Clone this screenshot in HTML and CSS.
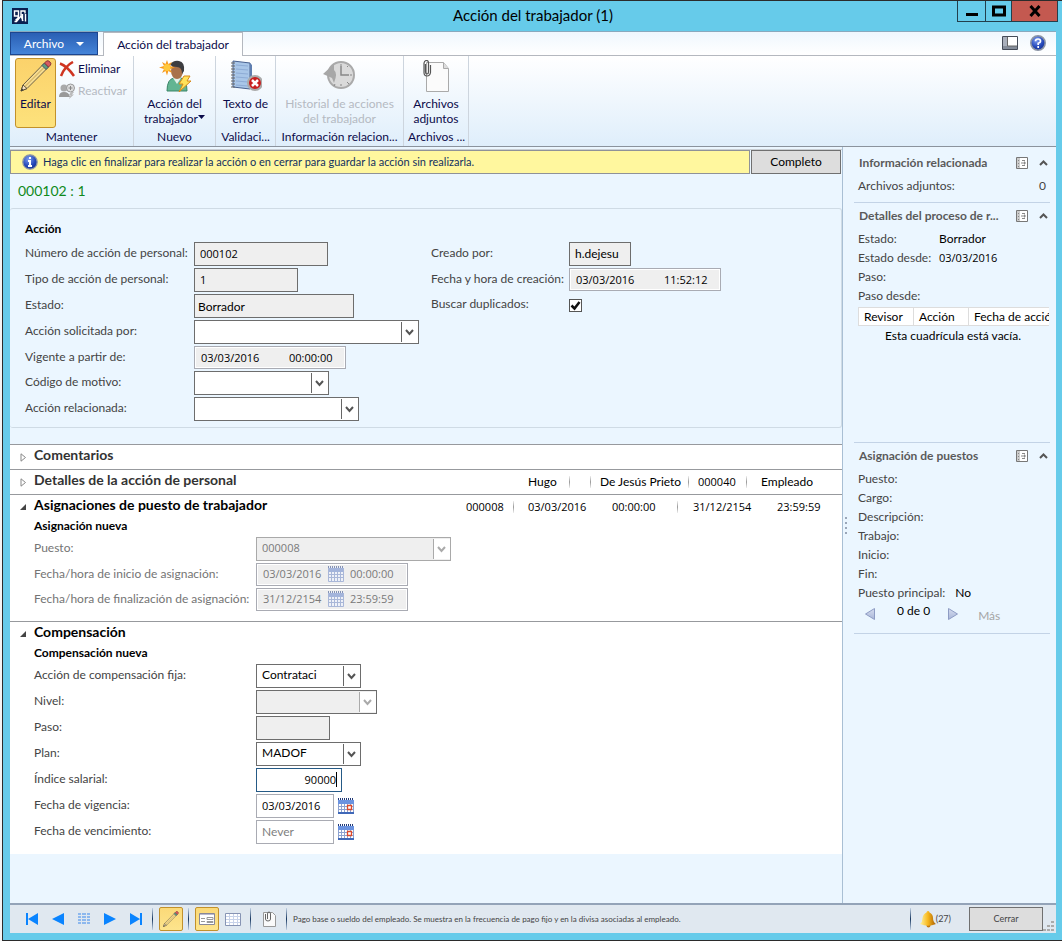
FILE: index.html
```html
<!DOCTYPE html>
<html lang="es">
<head>
    <meta charset="UTF-8">
    <meta name="viewport" content="width=device-width, initial-scale=1.0">
    <title>Acción del trabajador (1)</title>
    <link rel="stylesheet" href="styles.css">
</head>
<body>
    <!-- shared icons -->
    <svg class="defs" width="0" height="0" aria-hidden="true">
        <defs>
            <linearGradient id="gold" x1="0" y1="0" x2="1" y2="0"><stop offset="0" stop-color="#fff3a0"/><stop offset=".5" stop-color="#f7b71d"/><stop offset="1" stop-color="#a85c00"/></linearGradient>
            <linearGradient id="arrow" x1="0" y1="0" x2="0" y2="1"><stop offset="0" stop-color="#d5dcef"/><stop offset="1" stop-color="#a9b6d8"/></linearGradient>
            <radialGradient id="blue" cx=".4" cy=".3" r=".8"><stop offset="0" stop-color="#7d9df0"/><stop offset=".6" stop-color="#2447b8"/><stop offset="1" stop-color="#122c86"/></radialGradient>
            <symbol id="pencil" viewBox="0 0 32 32">
                <path d="M1 31 3 25 24 3.500 28 7.500 7 28.500z" fill="#f5dc90" stroke="#6b6046"/>
                <path d="M5 26.500 26 5.500" stroke="#c9a552"/>
                <path d="M1 31 3 25 7 28.500z" fill="#f3dfc0" stroke="#5b5136"/>
                <path d="M1 31 2 28.500 3.500 30z" fill="#333"/>
                <path d="M22 5.500 24.500 3 28.500 7 26 9.500z" fill="#5c9c80" stroke="#456"/>
                <path d="M24.500 3 26.500 1Q28 0 30 2 31.500 3.500 30.500 5L28.500 7z" fill="#d65a62" stroke="#833"/>
            </symbol>
            <symbol id="calendar" viewBox="0 0 16 16">
                <path d="M0 2h16v14H0z" fill="#fff"/>
                <path d="M0 2h16v4H0z" fill="#6b93e0"/>
                <path d="M0 1h16" stroke="#223a78" stroke-width="2" stroke-dasharray="1 1"/>
                <path d="M.5 6v9.500M3.500 6v10M6.500 6v10M9.500 6v10M12.500 6v10M15.500 6v10M0 8.500h16M0 11.500h16" fill="none" stroke="#8da2d0"/>
                <path d="M9.500 7.500h4v4h-4z" fill="#fff" stroke="#dc4a2c" stroke-width="1.300"/>
                <path d="M0 15h16" stroke="#3f68b8" stroke-width="2"/>
            </symbol>
            <symbol id="calendar-off" viewBox="0 0 16 16">
                <path d="M0 1h16v15H0z" fill="#eef1f8"/>
                <path d="M0 2h16v4H0z" fill="#a3b4db"/>
                <path d="M0 1h16" stroke="#8492b4" stroke-width="2" stroke-dasharray="1 1"/>
                <path d="M.5 2v13.500h15V2M3.500 6v10M6.500 6v10M9.500 6v10M12.500 6v10M0 8.500h16M0 11.500h16" fill="none" stroke="#a9b7d8"/>
            </symbol>
            <symbol id="pane" viewBox="0 0 12 12">
                <path d="M.5 .5h11v11H.5z" fill="#fff" stroke="#777"/>
                <path d="M1 1h3v10H1z" fill="#ccc"/>
                <path d="M2 3.500h1M2 6.500h1M2 9.500h1M6 3.500h3M6 8.500h3M5 6h3" stroke="#888"/>
                <path d="M8 4l2 2-2 2z" fill="#888"/>
            </symbol>
            <symbol id="up" viewBox="0 0 9 6"><path d="M1 5 4.500 1.500 8 5" fill="none" stroke="#555" stroke-width="2"/></symbol>
        </defs>
    </svg>

    <div class="window">
        <header class="titlebar">
            <svg class="app-icon" width="16" height="16" viewBox="0 0 16 16"><path fill="#0a2050" d="M0 0h16v16H0z"/><path d="M6.500 8h-4V3h4v5q0 3-3 4M9 8V3h4v2.500M2.500 13.500h2L9 8l2 5M10.500 6v7M13.500 6v7.500" fill="none" stroke="#fff" stroke-width="1.400"/></svg>
            <h1>Acción del trabajador (1)</h1>
            <div class="win-buttons">
                <button aria-label="Minimizar" class="w-min"><svg width="14" height="12"><path d="M1 8h12v3H1z"/></svg></button>
                <button aria-label="Maximizar" class="w-max"><svg width="14" height="12"><path d="M1.500 2h11v8h-11z" fill="none" stroke="#000" stroke-width="3"/></svg></button>
                <button aria-label="Cerrar ventana" class="w-close"><svg width="12" height="12"><path d="M1.500 1 10.500 11M10.500 1 1.500 11" stroke="#000" stroke-width="3"/></svg></button>
            </div>
        </header>

        <div class="client">
            <nav class="tabs">
                <button class="tab-file">Archivo <svg width="8" height="4"><path d="M0 0h8L4 4z" fill="#fff"/></svg></button>
                <button class="tab-active">Acción del trabajador</button>
                <div class="tab-tools">
                    <svg width="16" height="14"><path d="M.5 .5h15v13H.5z" fill="#fff" stroke="#454b58"/><path d="M1 1h4v12H1z" fill="#aab0bc"/><path d="M1 10h14v3H1z" fill="#858d9a"/><path d="M5.500 1v9H15" fill="none" stroke="#666"/></svg>
                    <svg width="16" height="16"><circle cx="8" cy="8" r="7.200" fill="url(#blue)" stroke="#8c95a5" stroke-width="1.600"/><path d="M5.500 6.300Q5.500 4 8 4t2.500 2.200Q10.500 7.500 8.200 8.300V10M8.200 11v2" fill="none" stroke="#fff" stroke-width="1.700"/></svg>
                </div>
            </nav>

            <div class="ribbon">
                <section class="group g-keep">
                    <div class="group-body">
                        <button class="big selected"><svg width="32" height="32"><use href="#pencil"/></svg><span>Editar</span></button>
                        <div class="small-list">
                            <button class="small"><svg width="16" height="16"><path d="M1 2.500Q8 5 15 15M14 1Q6 5 2 15" fill="none" stroke="#cf3420" stroke-width="2.500"/></svg>Eliminar</button>
                            <button class="small" disabled><svg width="16" height="16"><circle cx="5" cy="5" r="3.500" fill="#aaa"/><path d="M0 14Q0 9 5 9t6 5z" fill="#999"/><circle cx="11.500" cy="5" r="4" fill="#ddd" stroke="#999"/><path d="M11.500 3v4M9.500 5h4" stroke="#888"/><path d="M12 9h3l-2 2.500h2L10 16l1.500-4H10z" fill="#bbb"/></svg>Reactivar</button>
                        </div>
                    </div>
                    <h2>Mantener</h2>
                </section>
                <section class="group g-new">
                    <div class="group-body">
                        <button class="big">
                            <svg width="32" height="32" viewBox="0 0 32 32"><path d="M8 31Q8 19 15 18h7q6 2 6 13z" fill="#62b592" stroke="#3a8568"/><path d="M14 18l4 6 4-6z" fill="#e4efe9"/><ellipse cx="18" cy="11" rx="6" ry="8" fill="#a9714a"/><path d="M11 5Q14 0 20 1q6 1 5 10l-2 3Q23 7 18 7q-4 0-7-2z" fill="#3d3d40"/><path d="M8 0l1.300 4L13 2l-2 4 5 1.500L11 9l2 4-3.700-2L8 15.500 6.500 11 3 13l2-4-5-1.500L5 6 3 2l3.500 2z" fill="#f79a1c"/><circle cx="8" cy="7.500" r="3.500" fill="#ffc83c"/><path d="M25 16h6l-3 5h4L20 32l4-8h-4z" fill="#ffe25a" stroke="#d78918"/></svg>
                            <span>Acción del<br>trabajador<svg class="drop" width="7" height="4"><path d="M0 0h7L3.500 4z" fill="#0b0b4a"/></svg></span>
                        </button>
                    </div>
                    <h2>Nuevo</h2>
                </section>
                <section class="group g-valid">
                    <div class="group-body">
                        <button class="big">
                            <svg width="32" height="32" viewBox="0 0 32 32"><path d="M3 1l17 2v26L3 27z" fill="#a9c6e8" stroke="#48618f"/><path d="M20 3l2 2v22l-2 2z" fill="#5e7eb0"/><path d="M6 5l12 1M6 9l12 1M6 13l12 1M6 17l12 1M6 21l12 1M6 25l12 1" stroke="#8eacd6"/><path d="M1 3h4M1 6h4M1 9h4M1 12h4M1 15h4M1 18h4M1 21h4M1 24h4M1 27h4" stroke="#666"/><circle cx="25" cy="23" r="7" fill="#c81e1e" stroke="#aaa" stroke-width="2"/><path d="M22 20l6 6M28 20l-6 6" stroke="#fff" stroke-width="2.500"/></svg>
                            <span>Texto de<br>error</span>
                        </button>
                    </div>
                    <h2>Validaci...</h2>
                </section>
                <section class="group g-info">
                    <div class="group-body">
                        <button class="big" disabled>
                            <svg width="32" height="32" viewBox="0 0 32 32"><circle cx="18" cy="15" r="13" fill="#dadada" stroke="#aaa" stroke-width="2"/><path d="M18 4v2M18 24v2M27 15h2M24 7l1-1M24 22l2 2M12 24l-1 2" stroke="#888"/><path d="M18 6v9h8" fill="none" stroke="#888" stroke-width="1.500"/><path d="M0 14 11 4v6q4 3 0 13l-2-5z" fill="#a7a7a7"/></svg>
                            <span>Historial de acciones<br>del trabajador</span>
                        </button>
                    </div>
                    <h2>Información relacion...</h2>
                </section>
                <section class="group g-files">
                    <div class="group-body">
                        <button class="big">
                            <svg width="32" height="32" viewBox="0 0 32 32"><path d="M6.500 2.500h17l5 6v23h-22z" fill="#fbfbfb" stroke="#aaa"/><path d="M23.500 2.500v6h5" fill="#ddd" stroke="#aaa"/><path d="M5.500 4v8q0 2 1.500 2t1.500-2V3Q8.500 .5 6.500 .5T4 3v9.500q0 3.500 3 3.500t3.500-3.500V5" fill="none" stroke="#555" stroke-width="1.200"/></svg>
                            <span>Archivos<br>adjuntos</span>
                        </button>
                    </div>
                    <h2>Archivos ...</h2>
                </section>
            </div>

            <div class="workspace">
                <main>
                    <div class="notice-row">
                        <p class="notice"><svg width="16" height="16"><circle cx="8" cy="8" r="7.200" fill="url(#blue)" stroke="#8c95a5" stroke-width="1.300"/><path d="M8 3v2M6 7h2v5M6 12h4" fill="none" stroke="#fff" stroke-width="2"/></svg>Haga clic en finalizar para realizar la acción o en cerrar para guardar la acción sin realizarla.</p>
                        <button class="btn btn-complete">Completo</button>
                    </div>
                    <h2 class="record">000102 : 1</h2>

                    <form class="panel">
                        <h3>Acción</h3>
                        <div class="panel-columns">
                            <div class="fields">
                                <div class="row"><label for="numero">Número de acción de personal:</label><input id="numero" class="w134 num" value="000102" readonly></div>
                                <div class="row"><label for="tipo">Tipo de acción de personal:</label><input id="tipo" class="w104 num" value="1" readonly></div>
                                <div class="row"><label for="estado">Estado:</label><input id="estado" class="w160 tight" value="Borrador" readonly></div>
                                <div class="row"><label for="solicitada">Acción solicitada por:</label><select id="solicitada" class="w225"><option></option></select></div>
                                <div class="row"><label for="vigente">Vigente a partir de:</label><span class="datetime"><input id="vigente" value="03/03/2016" readonly><input class="time" aria-label="Hora de vigencia" value="00:00:00" readonly></span></div>
                                <div class="row"><label for="motivo">Código de motivo:</label><select id="motivo" class="w135"><option></option></select></div>
                                <div class="row"><label for="relacionada">Acción relacionada:</label><select id="relacionada" class="w165"><option></option></select></div>
                            </div>
                            <div class="fields created">
                                <div class="row"><label for="creado">Creado por:</label><input id="creado" class="w62" value="h.dejesu" readonly></div>
                                <div class="row"><label for="fecha">Fecha y hora de creación:</label><span class="datetime"><input id="fecha" value="03/03/2016" readonly><input class="time" aria-label="Hora de creación" value="11:52:12" readonly></span></div>
                                <div class="row"><label for="buscar">Buscar duplicados:</label><input type="checkbox" id="buscar" checked></div>
                            </div>
                        </div>
                    </form>

                    <section class="fasttab">
                        <header><svg width="7" height="9"><path d="M1 .8v7.400L5.500 4.500z" fill="#fff" stroke="#888"/></svg><h3>Comentarios</h3></header>
                    </section>
                    <section class="fasttab">
                        <header><svg width="7" height="9"><path d="M1 .8v7.400L5.500 4.500z" fill="#fff" stroke="#888"/></svg><h3>Detalles de la acción de personal</h3>
                            <div class="summary person"><span>Hugo</span><span></span><span>De Jesús Prieto</span><span class="num">000040</span><span>Empleado</span></div>
                        </header>
                    </section>
                    <section class="fasttab open">
                        <header><svg width="7" height="9"><path d="M6 2v6H0z" fill="#444"/></svg><h3>Asignaciones de puesto de trabajador</h3>
                            <div class="summary position num"><span>000008</span><span>03/03/2016</span><span>00:00:00</span><span>31/12/2154</span><span>23:59:59</span></div>
                        </header>
                        <h4>Asignación nueva</h4>
                        <div class="fields wide off">
                            <div class="row"><label for="puesto">Puesto:</label><select id="puesto" class="w195 num" disabled><option>000008</option></select></div>
                            <div class="row"><label for="inicio">Fecha/hora de inicio de asignación:</label><span class="datetime with-icon"><input id="inicio" value="03/03/2016" disabled><svg width="16" height="16"><use href="#calendar-off"/></svg><input class="time" aria-label="Hora de inicio" value="00:00:00" disabled></span></div>
                            <div class="row"><label for="fin">Fecha/hora de finalización de asignación:</label><span class="datetime with-icon"><input id="fin" value="31/12/2154" disabled><svg width="16" height="16"><use href="#calendar-off"/></svg><input class="time" aria-label="Hora de finalización" value="23:59:59" disabled></span></div>
                        </div>
                    </section>
                    <section class="fasttab open">
                        <header><svg width="7" height="9"><path d="M6 2v6H0z" fill="#444"/></svg><h3>Compensación</h3></header>
                        <h4>Compensación nueva</h4>
                        <div class="fields wide">
                            <div class="row"><label for="fija">Acción de compensación fija:</label><select id="fija" class="w105"><option>Contrataci</option></select></div>
                            <div class="row"><label for="nivel">Nivel:</label><select id="nivel" class="w121 dark" disabled><option></option></select></div>
                            <div class="row"><label for="paso">Paso:</label><input id="paso" class="w74" readonly></div>
                            <div class="row"><label for="plan">Plan:</label><select id="plan" class="w105"><option>MADOF</option></select></div>
                            <div class="row"><label for="indice">Índice salarial:</label><span class="editing"><input id="indice" class="w86 num" value="90000"><i class="caret"></i></span></div>
                            <div class="row"><label for="vigencia">Fecha de vigencia:</label><input id="vigencia" class="w78 light num" value="03/03/2016"><button type="button" class="icon-btn" aria-label="Elegir fecha de vigencia"><svg width="16" height="16"><use href="#calendar"/></svg></button></div>
                            <div class="row"><label for="vencimiento">Fecha de vencimiento:</label><input id="vencimiento" class="w78 light" placeholder="Never"><button type="button" class="icon-btn" aria-label="Elegir fecha de vencimiento"><svg width="16" height="16"><use href="#calendar"/></svg></button></div>
                        </div>
                    </section>
                </main>

                <div class="splitter"><i></i><i></i><i></i><i></i></div>

                <aside>
                    <section class="factbox">
                        <header><h3>Información relacionada</h3><svg width="12" height="12"><use href="#pane"/></svg><svg width="9" height="6"><use href="#up"/></svg></header>
                        <dl><div class="spread"><dt>Archivos adjuntos:</dt><dd>0</dd></div></dl>
                    </section>
                    <section class="factbox process">
                        <header><h3>Detalles del proceso de r...</h3><svg width="12" height="12"><use href="#pane"/></svg><svg width="9" height="6"><use href="#up"/></svg></header>
                        <dl>
                            <div><dt>Estado:</dt><dd>Borrador</dd></div>
                            <div><dt>Estado desde:</dt><dd class="num">03/03/2016</dd></div>
                            <div><dt>Paso:</dt><dd></dd></div>
                            <div><dt>Paso desde:</dt><dd></dd></div>
                        </dl>
                        <div class="grid-clip">
                            <table>
                                <thead><tr><th>Revisor</th><th>Acción</th><th>Fecha de acción</th></tr></thead>
                            </table>
                        </div>
                        <p class="empty">Esta cuadrícula está vacía.</p>
                    </section>
                    <section class="factbox">
                        <header><h3>Asignación de puestos</h3><svg width="12" height="12"><use href="#pane"/></svg><svg width="9" height="6"><use href="#up"/></svg></header>
                        <dl class="auto">
                            <div><dt>Puesto:</dt><dd></dd></div>
                            <div><dt>Cargo:</dt><dd></dd></div>
                            <div><dt>Descripción:</dt><dd></dd></div>
                            <div><dt>Trabajo:</dt><dd></dd></div>
                            <div><dt>Inicio:</dt><dd></dd></div>
                            <div><dt>Fin:</dt><dd></dd></div>
                            <div><dt>Puesto principal:</dt><dd>No</dd></div>
                        </dl>
                        <div class="pager">
                            <button aria-label="Anterior"><svg width="10" height="12"><path d="M9.500 .5v11L.5 6z" fill="url(#arrow)" stroke="#8e9cc4"/></svg></button>
                            <span>0 de 0</span>
                            <button aria-label="Siguiente"><svg width="10" height="12"><path d="M.5 .5v11L9.500 6z" fill="url(#arrow)" stroke="#8e9cc4"/></svg></button>
                            <button class="more" disabled>Más</button>
                        </div>
                    </section>
                </aside>
            </div>

            <footer class="statusbar">
                <div class="nav-buttons">
                    <button aria-label="Primero"><svg width="12" height="12"><path d="M0 0h2v12H0zM12 0v12L2 6z" fill="#0a84ff"/></svg></button>
                    <button aria-label="Registro anterior"><svg width="12" height="12"><path d="M12 0v12L0 6z" fill="#0a84ff"/></svg></button>
                    <button aria-label="Cuadrícula"><svg width="12" height="12"><path d="M0 1h3M4 1h4M9 1h3M0 4h3M4 4h4M9 4h3M0 7h3M4 7h4M9 7h3M0 10h3M4 10h4M9 10h3" stroke="#8db8ee" stroke-width="2"/></svg></button>
                    <button aria-label="Registro siguiente"><svg width="12" height="12"><path d="M0 0v12L12 6z" fill="#0a84ff"/></svg></button>
                    <button aria-label="Último"><svg width="12" height="12"><path d="M10 0h2v12h-2zM0 0v12L10 6z" fill="#0a84ff"/></svg></button>
                </div>
                <i class="sep"></i>
                <button class="tool on" aria-label="Editar registro"><svg width="16" height="16"><use href="#pencil"/></svg></button>
                <i class="sep"></i>
                <button class="tool on" aria-label="Vista de formulario"><svg width="16" height="12"><path d="M.5 .5h15v11H.5z" fill="#fff" stroke="#889"/><path d="M1 1.500h14" stroke="#bbc"/><path d="M2 5.500h4M2 8.500h4M8 4.500h6v2H8zM8 8.500h6v1H8z" fill="none" stroke="#999"/></svg></button>
                <button class="tool" aria-label="Vista de cuadrícula"><svg width="16" height="13"><path d="M.5 .5h15v12H.5z" fill="#fff" stroke="#8794b4"/><path d="M1 3.500h14M1 6.500h14M1 9.500h14M4.500 1v11M8.500 1v11M12.500 1v11" stroke="#c8d3ea"/></svg></button>
                <i class="sep"></i>
                <button class="tool" aria-label="Adjuntos"><svg width="14" height="16"><path d="M1.500 1.500h9l3 3v11h-12z" fill="#fafafa" stroke="#999"/><path d="M3.500 3v5q0 2 2.500 2t2.500-2V3q0-2-1.500-2T5.500 3v5" fill="none" stroke="#666"/></svg></button>
                <i class="sep"></i>
                <p>Pago base o sueldo del empleado. Se muestra en la frecuencia de pago fijo y en la divisa asociadas al empleado.</p>
                <i class="sep"></i>
                <a class="alerts" href="#"><svg width="16" height="17"><circle cx="8.500" cy="14.500" r="2" fill="#c47a10"/><path d="M8 0q1.500 0 1.500 1.500Q13 3 13 7q0 4 3 6-8 3.500-16 0 2.500-2 2.500-6Q3 3 6.500 1.500 6.500 0 8 0z" fill="url(#gold)"/></svg>(27)</a>
                <button class="btn btn-close">Cerrar</button>
                <svg class="grip" width="11" height="11"><path d="M8 1h3M8 5h3M8 9h3M4 5h3M4 9h3M0 9h3" stroke="#aaa" stroke-width="2"/></svg>
            </footer>
        </div>
    </div>
</body>
</html>
```

FILE: styles.css
```css
* { box-sizing: border-box; }
body { margin: 0; background: #f4f4f4; color: #000; font: 12px/16px Lato, "Open Sans", sans-serif; }
h1, h2, h3, h4, p, dl, dd { margin: 0; font-size: 12px; font-weight: normal; }
button, input, select { font: inherit; color: inherit; margin: 0; border-radius: 0; }
button { background: none; border: 0; padding: 0; }
svg { display: block; flex: none; }
.defs { position: absolute; }
.num, .datetime input { font-family: "Open Sans", "Noto Sans", sans-serif; font-size: 11px; }

/* window frame */
.window { min-height: 100vh; margin-left: 2px; border: 1px solid #2b2b2b; border-right: 0; background: #66cbea; display: flex; flex-direction: column; padding: 0 6px 7px 7px; }
.titlebar { height: 30px; display: flex; align-items: center; justify-content: space-between; margin-right: -6px; position: relative; }
.titlebar h1 { font-size: 15px; line-height: 28px; text-align: center; position: absolute; left: 0; right: 6px; top: 0; }
.app-icon { margin-left: 2px; }
.win-buttons { display: flex; align-self: flex-start; margin-right: 4px; position: relative; }
.win-buttons button { height: 21px; border: 1px solid #223f4c; border-top: 0; margin-left: -1px; display: flex; align-items: center; justify-content: center; }
.w-min { width: 29px; }
.w-max { width: 27px; }
.win-buttons .w-close { width: 47px; background: #c45950; }
.client { flex: 1; display: flex; flex-direction: column; background: #ebf6ff; }

/* tabs */
.tabs { height: 25px; display: flex; align-items: flex-end; background: linear-gradient(#eff7fe, #fff); border-top: 1px solid #8aa9bd; border-bottom: 1px solid #b4b8bf; color: #0b0b4a; }
.tab-file { width: 88px; height: 23px; display: flex; align-items: center; justify-content: center; gap: 12px; background: linear-gradient(#2a5fb4, #4584d8); border: 1px solid #1c4690; color: #fff; }
.tab-active { height: 24px; margin: 0 0 -1px 5px; width: 140px; background: #fff; border: 1px solid #b4b8bf; border-bottom: 0; white-space: nowrap; }
.tab-tools { margin: 0 10px 4px auto; display: flex; align-items: center; gap: 12px; }

/* ribbon */
.ribbon { height: 91px; display: flex; background: linear-gradient(#fff, #dfeefb); border-bottom: 1px solid #8b939d; color: #0b0b4a; }
.group { display: flex; flex-direction: column; justify-content: space-between; border-right: 1px solid #cdd5de; padding: 2px 4px 1px; }
.group h2 { text-align: center; white-space: nowrap; }
.group-body { display: flex; justify-content: center; gap: 3px; }
.g-keep { width: 124px; }
.g-new { width: 82px; }
.g-valid { width: 60px; }
.g-info { width: 128px; }
.g-files { width: 65px; }
.big { display: flex; flex-direction: column; align-items: center; gap: 4px; height: 70px; padding: 2px 0 0; line-height: 15px; white-space: nowrap; }
.selected { width: 41px; border: 1px solid #c2912b; border-radius: 3px; background: linear-gradient(#fbd26b, #fde27c); padding-top: 1px; }
.g-keep .group-body { padding-left: 1px; }
.small-list { flex: 1; display: flex; flex-direction: column; gap: 6px; padding-top: 3px; }
.small { display: flex; align-items: center; gap: 3px; height: 16px; }
.ribbon button:disabled { color: #b5bac2; }
.drop { display: inline-block; vertical-align: 4px; }

/* work area */
.workspace { flex: 1; display: flex; }
main { flex: 1; min-width: 0; padding-top: 2px; }
.notice-row { display: flex; gap: 1px; padding-right: 1px; align-items: center; border-top: 1px solid #c9ced3; }
.notice { flex: 1; height: 24px; display: flex; align-items: center; gap: 5px; padding-left: 11px; background: #fff79e; border: 1px solid #8f9298; color: #12305f; font-size: 11px; white-space: nowrap; }
.btn { height: 24px; background: #ddd; border: 1px solid #707070; }
.btn-complete { width: 90px; }
.record { color: #0f8a1c; font-size: 14px; line-height: 20px; padding: 7px 8px; }
.panel { border: 1px solid #cfdbe5; border-width: 1px 1px 1px 0; border-radius: 3px; padding: 12px 15px 6px; margin-bottom: 16px; }
.panel h3 { font-weight: bold; margin-bottom: 5px; }
.panel-columns { display: flex; }
.panel .fields:first-child { width: 406px; }

/* fields */
.fields { display: flex; flex-direction: column; gap: 2px; }
.row { display: flex; align-items: center; }
.row label { flex: none; width: 169px; color: #444; white-space: nowrap; padding-bottom: 2px; }
.created .row label { width: 138px; }
.wide .row label { width: 222px; }
.off .row label { color: #747474; }
input, select { height: 24px; border: 1px solid #6d6d6d; background: #fff; padding: 0 5px 2px; }
input[readonly] { background: #efefef; }
input.tight { padding: 1px 3px 0; }
select { appearance: none; background: #fff url("data:image/svg+xml,%3Csvg xmlns='http://www.w3.org/2000/svg' width='17' height='20'%3E%3Cpath d='M.5 0v20' stroke='%23666'/%3E%3Cpath d='M5 8l3.500 4L12 8' fill='none' stroke='%23555' stroke-width='2'/%3E%3C/svg%3E") no-repeat right 0 center; }
select:disabled { opacity: 1; color: #7a7a7a; border-color: #a9a9a9; background: #efefef url("data:image/svg+xml,%3Csvg xmlns='http://www.w3.org/2000/svg' width='17' height='20'%3E%3Cpath fill='%23fff' d='M0 0h17v20H0z'/%3E%3Cpath d='M.5 0v20' stroke='%23aaa'/%3E%3Cpath d='M5 8l3.500 4L12 8' fill='none' stroke='%23aaa' stroke-width='2'/%3E%3C/svg%3E") no-repeat right 0 center; }
select.dark:disabled { border-color: #6d6d6d; }
.w62 { width: 62px; }
.w74 { width: 74px; }
.w78 { width: 78px; }
.w86 { width: 86px; }
.w104 { width: 104px; }
.w105 { width: 105px; }
.w121 { width: 121px; }
.w134 { width: 134px; }
.w135 { width: 135px; }
.w160 { width: 160px; }
.w165 { width: 165px; }
.w195 { width: 195px; }
.w225 { width: 225px; }
.light { border-color: #a9abb3; }
.light::placeholder { color: #808080; }
.datetime { display: flex; align-items: center; width: 152px; height: 23px; border: 1px solid #a9abb3; background: #efefef; box-shadow: inset 0 0 0 1px #fff; }
.datetime input { width: 88px; height: 21px; border: 0; background: none; padding: 0 0 1px 6px; }
.datetime .time { width: 62px; }
.datetime input:disabled { color: #7a7a7a; }
.with-icon { padding-bottom: 1px; }
.with-icon input { width: 71px; }
.editing { position: relative; }
.editing input { border-color: #255a86; text-align: right; display: block; }
.caret { position: absolute; right: 5px; top: 4px; width: 1px; height: 15px; background: #000; }
.icon-btn { margin-left: 4px; }
input[type="checkbox"] { appearance: none; width: 13px; height: 13px; padding: 0; border: 1px solid #555; background: #fff url("data:image/svg+xml,%3Csvg xmlns='http://www.w3.org/2000/svg' width='11' height='11'%3E%3Cpath d='M1.500 5.500l3 3L9.500 2' fill='none' stroke='%23111' stroke-width='2.500'/%3E%3C/svg%3E") center no-repeat; }
.created .row:last-child { height: 24px; }

/* fast tabs */
.fasttab { background: #fff; border-top: 1px solid #97999d; padding-left: 10px; }
.fasttab header { height: 24px; display: flex; align-items: center; gap: 7px; }
.fasttab h3 { font-size: 14px; font-weight: bold; color: #333; white-space: nowrap; padding-bottom: 4px; }
.fasttab.open header { height: 23px; }
.fasttab.open h3 { color: #000; }
.fasttab h4 { font-weight: bold; padding-left: 14px; margin: 0 0 3px; }
.fasttab .fields { padding-left: 14px; }
.open { padding-bottom: 10px; }
.summary { margin-left: auto; display: flex; white-space: nowrap; }
.summary span { min-height: 12px; }
.person { padding-right: 19px; }
.position { padding-right: 12px; }
.person span + span, .position span:nth-child(2), .position span:nth-child(4) { background: linear-gradient(#eee, #999, #eee) left center / 1px 12px no-repeat; }
.person span { width: 41px; }
.person span:nth-child(2) { width: 21px; }
.person span:nth-child(3) { width: 98px; padding-left: 10px; }
.person span:nth-child(4) { width: 58px; padding-left: 10px; }
.person span:nth-child(5) { width: 77px; padding-left: 15px; }
.position span { width: 47px; }
.position span:nth-child(2) { width: 99px; padding-left: 15px; }
.position span:nth-child(3) { width: 65px; }
.position span:nth-child(4) { width: 100px; padding-left: 16px; }
.position span:nth-child(5) { width: 53px; }

/* fact boxes */
.splitter { flex: none; width: 8px; border-left: 1px solid #a9bfd4; display: flex; flex-direction: column; justify-content: center; gap: 3px; padding-left: 2px; }
.splitter i { width: 2px; height: 2px; background: #9aa6b8; }
aside { flex: none; width: 206px; padding: 3px 6px 0 4px; color: #000; }
.factbox { border-bottom: 1px solid #c3d3e6; padding-bottom: 7px; }
.factbox header { display: flex; align-items: center; padding: 4px 2px 4px 5px; height: 26px; }
.factbox h3 { flex: 1; min-width: 0; font-weight: bold; color: #5a5a5a; white-space: nowrap; }
.factbox header svg { margin-left: 11px; }
.factbox dl { padding-left: 4px; }
.factbox dl div { display: flex; height: 19px; align-items: center; }
.factbox dt { width: 81px; color: #444; white-space: nowrap; }
.factbox dl .spread { justify-content: space-between; padding-right: 4px; }
.factbox .spread dd { color: #444; }
.factbox .auto dt { width: auto; margin-right: 10px; }
.process { min-height: 240px; }
.grid-clip { overflow: hidden; margin: 2px 1px 0 4px; }
table { border-collapse: collapse; background: #fff; }
th { font-weight: normal; text-align: left; border: 1px solid #ddd; padding: 0 5px; height: 18px; line-height: 16px; white-space: nowrap; min-width: 55px; }
.empty { padding: 2px 0 0 31px; }
.pager { display: flex; align-items: center; height: 24px; padding-left: 11px; }
.pager span { margin: 0 18px 6px 22px; }
.more { margin-left: 20px; color: #a5a5a5; padding-top: 3px; }

/* status bar */
.statusbar { height: 30px; display: flex; align-items: center; background: #e0e8f0; border-top: 2px solid #93a3b8; font-size: 9px; color: #444; }
.nav-buttons { display: flex; gap: 14px; padding: 0 10px 0 16px; }
.sep { flex: none; width: 1px; height: 22px; background: linear-gradient(#c3d3e6, #16365f, #c3d3e6); }
.tool { width: 24px; height: 24px; margin-left: 2px; display: flex; align-items: center; justify-content: center; }
.tool + .sep { margin-left: 5px; }
.sep + .tool { margin-left: 6px; }
.on { background: linear-gradient(#fbd978, #fde48d); border: 1px solid #c2912b; border-radius: 2px; }
.statusbar p { flex: 1; font-size: 8px; padding-left: 6px; white-space: nowrap; }
.alerts { display: flex; align-items: center; color: #444; text-decoration: none; margin: 0 18px 0 9px; }
.btn-close { width: 74px; font-size: 9px; }
.grip { align-self: flex-end; margin: 0 2px 1px 0; }
```
